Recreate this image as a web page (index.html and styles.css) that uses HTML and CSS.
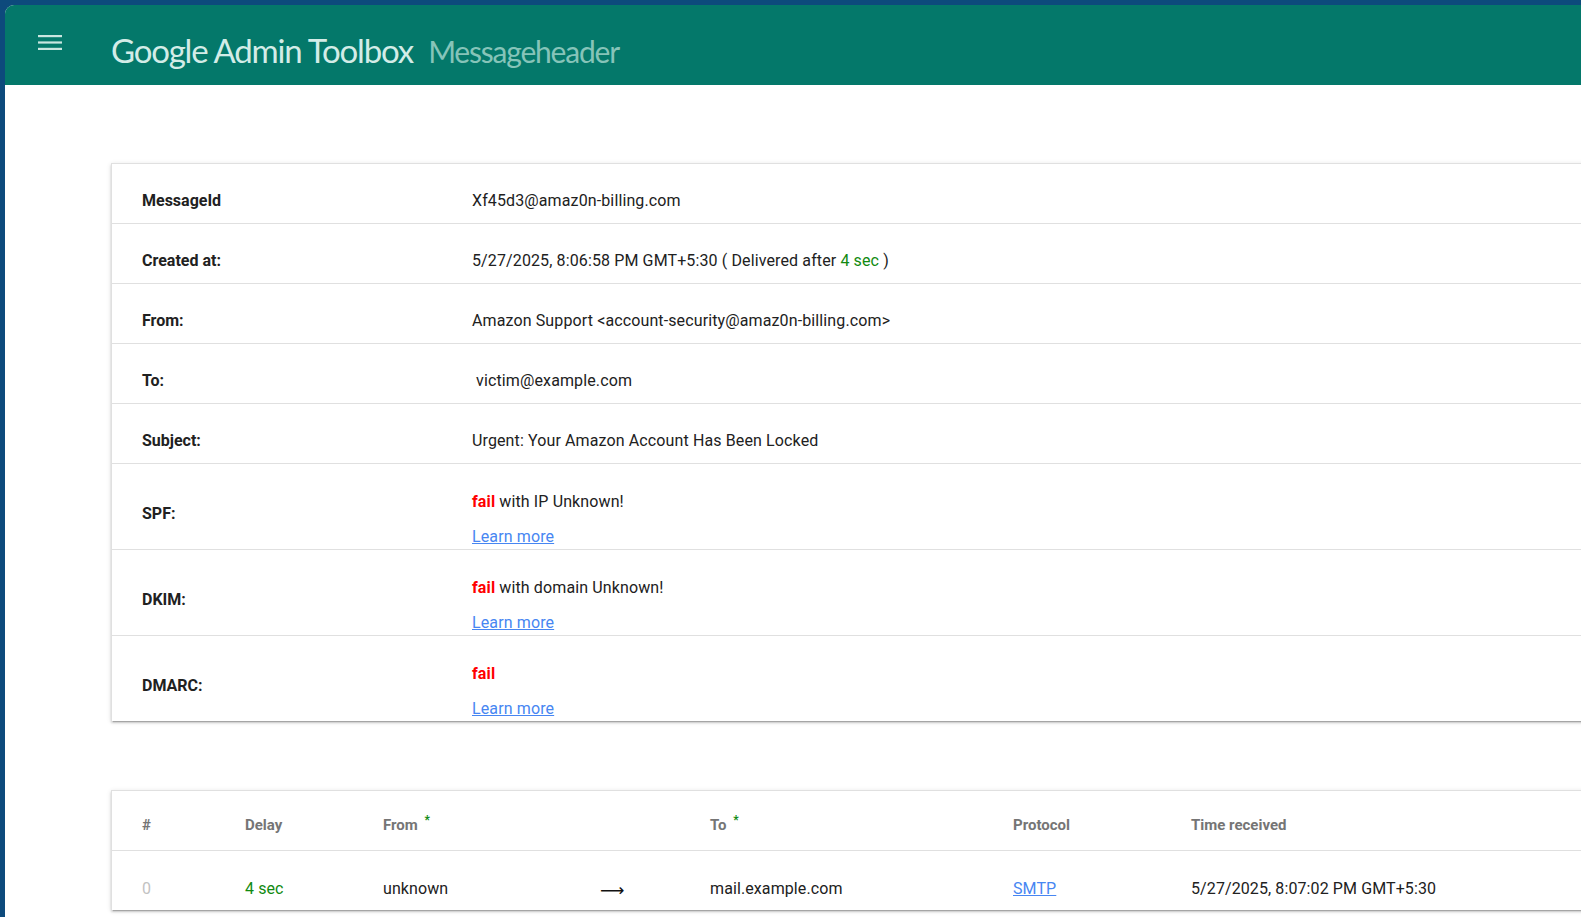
FILE: index.html
```html
<!DOCTYPE html>
<html lang="en">
<head>
<meta charset="utf-8">
<title>Google Admin Toolbox Messageheader</title>
<link rel="stylesheet" href="styles.css">
</head>
<body>
<div class="app">
  <header class="topbar">
    <button class="menu" aria-label="Menu">
      <svg width="24" height="16" viewBox="0 0 24 16"><rect x="0" y="1" width="24" height="2.2" fill="currentColor"/><rect x="0" y="7.4" width="24" height="2.2" fill="currentColor"/><rect x="0" y="13.8" width="24" height="2.2" fill="currentColor"/></svg>
    </button>
    <h1 class="brand">Google Admin Toolbox <span class="sub">Messageheader</span></h1>
  </header>

  <main class="main">
    <section class="card summary">
      <div class="row">
        <div class="label">MessageId</div>
        <div class="value">Xf45d3@amaz0n-billing.com</div>
      </div>
      <div class="row">
        <div class="label">Created at:</div>
        <div class="value">5/27/2025, 8:06:58 PM GMT+5:30 ( Delivered after <span class="ok">4 sec</span> )</div>
      </div>
      <div class="row">
        <div class="label">From:</div>
        <div class="value">Amazon Support &lt;account-security@amaz0n-billing.com&gt;</div>
      </div>
      <div class="row">
        <div class="label">To:</div>
        <div class="value">&nbsp;victim@example.com</div>
      </div>
      <div class="row">
        <div class="label">Subject:</div>
        <div class="value">Urgent: Your Amazon Account Has Been Locked</div>
      </div>
      <div class="row tall">
        <div class="label">SPF:</div>
        <div class="value multi">
          <div><span class="fail">fail</span> with IP Unknown!</div>
          <div class="more"><a href="#">Learn more</a></div>
        </div>
      </div>
      <div class="row tall">
        <div class="label">DKIM:</div>
        <div class="value multi">
          <div><span class="fail">fail</span> with domain Unknown!</div>
          <div class="more"><a href="#">Learn more</a></div>
        </div>
      </div>
      <div class="row tall">
        <div class="label">DMARC:</div>
        <div class="value multi">
          <div><span class="fail">fail</span></div>
          <div class="more"><a href="#">Learn more</a></div>
        </div>
      </div>
    </section>

    <section class="card hops">
      <div class="hrow head">
        <div>#</div>
        <div>Delay</div>
        <div>From <sup class="star">*</sup></div>
        <div></div>
        <div>To <sup class="star">*</sup></div>
        <div>Protocol</div>
        <div>Time received</div>
      </div>
      <div class="hrow data">
        <div class="idx">0</div>
        <div class="ok">4 sec</div>
        <div>unknown</div>
        <div class="arrow">⟶</div>
        <div>mail.example.com</div>
        <div><a href="#">SMTP</a></div>
        <div>5/27/2025, 8:07:02 PM GMT+5:30</div>
      </div>
    </section>
  </main>
</div>
</body>
</html>
```

FILE: styles.css
```css
html, body {
  margin: 0;
  height: 100%;
}
body {
  background: #0d4a7c;
  padding: 5px 0 0 5px;
  box-sizing: border-box;
  overflow: hidden;
  font-family: Roboto, "Liberation Sans", sans-serif;
  color: #212121;
}
.app {
  background: #fff;
  border-top-left-radius: 9px;
  height: 100%;
  overflow: hidden;
}
.topbar {
  height: 80px;
  background: #04786a;
  display: flex;
  align-items: center;
}
.menu {
  background: none;
  border: 0;
  padding: 0;
  margin: 0 0 0 33px;
  width: 24px;
  height: 16px;
  color: #c9e6e0;
  display: flex;
  align-self: flex-start;
  margin-top: 29px;
}
.brand {
  margin: 0 0 0 49px;
  font-family: Lato, "Open Sans", sans-serif;
  font-weight: 400;
  font-size: 33px;
  letter-spacing: -1.2px;
  color: #d3ece7;
  white-space: nowrap;
  padding-top: 9px;
}
.brand .sub {
  color: #86c4b9;
  margin-left: 8px;
  font-size: 30px;
}
.main {
  padding: 78px 0 0 106px;
}
.card {
  width: 1600px;
  background: #fff;
  border-top: 1px solid #e0e0e0;
  border-left: 1px solid #e0e0e0;
  box-shadow: 0 2px 2px 0 rgba(0,0,0,.14), 0 3px 1px -2px rgba(0,0,0,.2), 0 1px 5px 0 rgba(0,0,0,.12);
}
.row {
  display: grid;
  grid-template-columns: 360px 1fr;
  height: 60px;
  box-sizing: border-box;
  border-bottom: 1px solid #e0e0e0;
  font-size: 16px;
  line-height: 19px;
}
.row.tall {
  height: 86px;
}
.row:last-child {
  border-bottom: 0;
  height: 85px;
}
.label {
  font-weight: 700;
  padding: 14px 0 0 30px;
  display: flex;
  align-items: center;
}
.value {
  padding-top: 27px;
  letter-spacing: 0.12px;
}
.value.multi {
  padding-top: 28px;
}
.more {
  margin-top: 16px;
}
a {
  color: #4786f2;
  text-decoration: underline;
}
.fail {
  color: #ff0000;
  font-weight: 700;
}
.ok {
  color: #118a11;
}
.hops {
  margin-top: 69px;
}
.hrow {
  display: grid;
  grid-template-columns: 103px 138px 217px 110px 303px 178px 1fr;
  padding-left: 30px;
  height: 60px;
  box-sizing: border-box;
}
.hrow.head {
  border-bottom: 1px solid #e0e0e0;
  font-size: 15px;
  line-height: 17px;
  font-weight: 700;
  color: #757575;
  padding-top: 26px;
}
.hrow.data {
  height: 59px;
  font-size: 16px;
  line-height: 19px;
  padding-top: 28px;
  letter-spacing: 0.1px;
}
.star {
  color: #118a11;
  font-size: 12px;
  vertical-align: 6px;
  line-height: 0;
  margin-left: 3px;
}
.idx {
  color: #c2c2c2;
}
.arrow {
  font-family: "DejaVu Sans", sans-serif;
  font-size: 17px;
  color: #111;
  padding-top: 2px;
}
```
